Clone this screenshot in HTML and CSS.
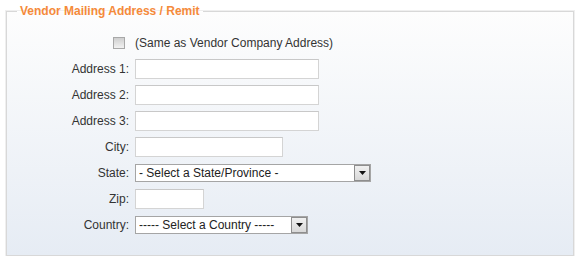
FILE: index.html
```html
<!DOCTYPE html>
<html lang="en">
<head>
    <meta charset="UTF-8">
    <title>Vendor Mailing Address</title>
    <link rel="stylesheet" href="styles.css">
</head>
<body>
    <fieldset class="box">
        <legend>Vendor Mailing Address / Remit</legend>
        <div class="form">
            <div class="lbl"><input type="checkbox" class="chk" id="same"></div>
            <div class="fld"><label for="same">(Same as Vendor Company Address)</label></div>

            <div class="lbl">Address 1:</div>
            <div class="fld"><input type="text" class="txt wide"></div>

            <div class="lbl">Address 2:</div>
            <div class="fld"><input type="text" class="txt wide"></div>

            <div class="lbl">Address 3:</div>
            <div class="fld"><input type="text" class="txt wide"></div>

            <div class="lbl">City:</div>
            <div class="fld"><input type="text" class="txt city"></div>

            <div class="lbl">State:</div>
            <div class="fld">
                <span class="sel state">
                    <select>
                        <option>- Select a State/Province -</option>
                    </select>
                    <span class="arrow"><svg width="7" height="4" viewBox="0 0 7 4"><path d="M0 0h7L3.5 4z" fill="#111"/></svg></span>
                </span>
            </div>

            <div class="lbl">Zip:</div>
            <div class="fld"><input type="text" class="txt zip"></div>

            <div class="lbl">Country:</div>
            <div class="fld">
                <span class="sel country">
                    <select>
                        <option>----- Select a Country -----</option>
                    </select>
                    <span class="arrow"><svg width="7" height="4" viewBox="0 0 7 4"><path d="M0 0h7L3.5 4z" fill="#111"/></svg></span>
                </span>
            </div>
        </div>
    </fieldset>
</body>
</html>
```

FILE: styles.css
```css
body { margin: 0; padding: 4px 6px 0 6px; background: #fff; font-family: "Liberation Sans", Arial, sans-serif; font-size: 12px; color: #333; }
.box { margin: 0; padding: 0; height: 250px; border: 1px solid #d8d8d8; box-shadow: 0 0 0 1px #efefef; background: linear-gradient(#fdfdfd, #e6ecf4); }
.box legend { margin-left: 10px; padding: 0 3px; color: #f58a3a; font-weight: bold; font-size: 12px; }
.form { display: grid; grid-template-columns: 122px auto; column-gap: 6px; row-gap: 6px; padding-top: 15px; }
.lbl { height: 20px; display: flex; align-items: center; justify-content: flex-end; }
.fld { height: 20px; display: flex; align-items: center; }
.chk { appearance: none; margin: 0 4px 0 0; width: 12px; height: 12px; border: 1px solid #a8a8a8; background: linear-gradient(#cfcfcf, #f2f2f2); }
.txt { box-sizing: border-box; height: 20px; margin: 0; border: 1px solid #d4d4d4; border-top-color: #c8c8c8; background: #fff; }
.wide { width: 184px; }
.city { width: 148px; }
.zip { width: 69px; }
.sel { position: relative; display: inline-block; }
.sel select { appearance: none; box-sizing: border-box; height: 18px; margin: 0; padding: 0 0 0 3px; border: 1px solid #a5a5a5; background: #fff; font-family: "Liberation Sans", Arial, sans-serif; font-size: 12px; color: #222; }
.state select { width: 236px; }
.country select { width: 173px; }
.arrow { position: absolute; right: 1px; top: 1px; width: 14px; height: 14px; border: 1px solid #8e8e8e; background: linear-gradient(#f0f0f0, #d8d8d8); display: flex; align-items: center; justify-content: center; }
.arrow svg { display: block; }
```
